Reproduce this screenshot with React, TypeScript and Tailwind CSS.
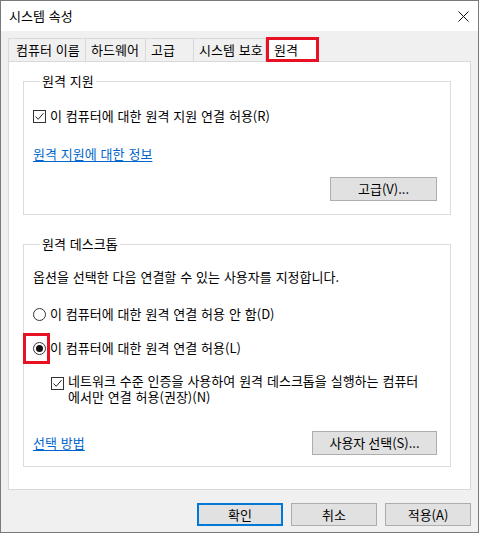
import React from "react";

const font = "font-['Noto_Sans_CJK_KR','Noto_Sans',sans-serif]";

function CheckBox({ checked }: { checked: boolean }) {
  return (
    <span className="grid h-[13px] w-[13px] shrink-0 place-items-center border border-[#333] bg-white">
      {checked && (
        <svg width="11" height="11" viewBox="0 0 11 11">
          <path d="M1.5 5.5 L4.2 8.3 L9.5 2.2" fill="none" stroke="#222" strokeWidth="1" />
        </svg>
      )}
    </span>
  );
}

function Radio({ checked }: { checked: boolean }) {
  return (
    <span className="grid h-[13px] w-[13px] shrink-0 place-items-center rounded-full border border-[#333] bg-white">
      {checked && <span className="h-[7px] w-[7px] rounded-full bg-[#111]" />}
    </span>
  );
}

function Btn({
  children,
  className = "",
  primary = false,
}: {
  children: React.ReactNode;
  className?: string;
  primary?: boolean;
}) {
  return (
    <button
      type="button"
      className={`flex items-center justify-center bg-[#e1e1e1] text-[13px] text-black ${
        primary ? "border-2 border-[#0078d7]" : "border border-[#adadad]"
      } ${className}`}
    >
      {children}
    </button>
  );
}

const tabs = [
  { label: "컴퓨터 이름", w: "w-[78px]", pl: "pl-[7px]" },
  { label: "하드웨어", w: "w-[60px]", pl: "pl-[5px]" },
  { label: "고급", w: "w-[48px]", pl: "pl-[5px]" },
  { label: "시스템 보호", w: "w-[72px]", pl: "pl-[5px]" },
];

export default function App() {
  return (
    <div
      className={`flex h-[533px] w-[479px] flex-col border border-[#7a7a7a] bg-[#f0f0f0] text-[13px] leading-[16px] text-black [word-spacing:1px] ${font}`}
    >
      {/* title bar */}
      <div className="flex h-[30px] shrink-0 items-center justify-between bg-white pl-[8px] pr-[9px]">
        <span>시스템 속성</span>
        <svg width="11" height="11" viewBox="0 0 11 11">
          <path d="M0.5 0.5 L10.5 10.5 M10.5 0.5 L0.5 10.5" stroke="#111" strokeWidth="1" />
        </svg>
      </div>

      <div className="flex flex-col px-[7px] pt-[5px]">
        {/* tabs */}
        <div className="relative z-10 mb-[-1px] flex h-[26px] items-end">
          {tabs.map((t, i) => (
            <div
              key={t.label}
              className={`mb-[1px] flex h-[23px] items-center whitespace-nowrap border-t border-r border-[#d9d9d9] bg-[#f0f0f0] ${
                i === 0 ? "border-l" : ""
              } ${t.w} ${t.pl}`}
            >
              {t.label}
            </div>
          ))}
          <div className="relative flex h-[25px] w-[53px] items-center bg-white pl-[8px]">
            원격
            <span className="absolute inset-0 border-[3px] border-[#e81123]" />
          </div>
        </div>

        {/* tab panel */}
        <div className="flex h-[429px] flex-col border border-[#d9d9d9] bg-white pt-[11px]">
          <fieldset className="ml-[14px] w-[428px] border border-[#dcdcdc] px-[9px] pb-[13px]">
            <legend className="ml-[7px] px-[2px] leading-[16px]">원격 지원</legend>
            <label className="mt-[19px] flex h-[16px] items-center gap-[4px]">
              <CheckBox checked />
              <span>이 컴퓨터에 대한 원격 지원 연결 허용(R)</span>
            </label>
            <a className="mt-[22px] block h-[16px] w-fit text-[#0066cc] underline underline-offset-2">
              원격 지원에 대한 정보
            </a>
            <div className="mt-[15px] flex justify-end pr-[4px]">
              <Btn className="h-[24px] w-[107px]">고급(V)...</Btn>
            </div>
          </fieldset>

          <fieldset className="ml-[14px] mt-[21px] w-[428px] border border-[#dcdcdc] px-[9px] pb-[11px]">
            <legend className="ml-[7px] px-[2px] leading-[16px]">원격 데스크톱</legend>
            <p className="mt-[17px] h-[16px]">옵션을 선택한 다음 연결할 수 있는 사용자를 지정합니다.</p>
            <label className="mt-[21px] flex h-[16px] items-center gap-[4px]">
              <Radio checked={false} />
              <span>이 컴퓨터에 대한 원격 연결 허용 안 함(D)</span>
            </label>
            <label className="relative mt-[18px] flex h-[16px] items-center gap-[4px]">
              <Radio checked />
              <span>이 컴퓨터에 대한 원격 연결 허용(L)</span>
              <span className="absolute left-[-10px] top-[-7px] h-[31px] w-[27px] border-[3px] border-[#e81123]" />
            </label>
            <label className="mt-[17px] flex items-start gap-[4px] pl-[18px] leading-[16px]">
              <span className="mt-[4px]">
                <CheckBox checked />
              </span>
              <span className="whitespace-nowrap">
                네트워크 수준 인증을 사용하여 원격 데스크톱을 실행하는 컴퓨터
                <br />
                에서만 연결 허용(권장)(N)
              </span>
            </label>
            <div className="mt-[26px] flex h-[24px] items-center justify-between pr-[4px]">
              <a className="text-[#0066cc] underline underline-offset-2">선택 방법</a>
              <Btn className="h-[24px] w-[125px]">사용자 선택(S)...</Btn>
            </div>
          </fieldset>
        </div>

        {/* dialog buttons */}
        <div className="mt-[13px] flex justify-end gap-[8px]">
          <Btn primary className="h-[23px] w-[86px]">
            확인
          </Btn>
          <Btn className="h-[23px] w-[86px]">취소</Btn>
          <Btn className="h-[23px] w-[86px]">적용(A)</Btn>
        </div>
      </div>
    </div>
  );
}
